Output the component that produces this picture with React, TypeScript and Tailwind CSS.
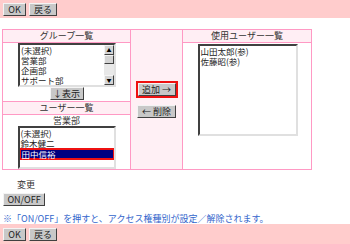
import React from "react"

const font = "font-['Noto_Sans_CJK_JP',sans-serif]"

function Btn({ children, className = "" }: { children: React.ReactNode; className?: string }) {
  return (
    <button
      className={`h-[13px] px-0 bg-[#c8c8c8] text-[9px] leading-none whitespace-nowrap text-[#222] border border-t-[#f4f4f4] border-l-[#f4f4f4] border-r-[#404040] border-b-[#404040] flex items-center justify-center shrink-0 ${className}`}
    >
      {children}
    </button>
  )
}

function ActionBar({ className = "" }: { className?: string }) {
  return (
    <div className={`bg-[#ffcccc] flex items-center gap-[3px] px-[3px] ${className}`}>
      <Btn className="w-[23px]">OK</Btn>
      <Btn className="w-[28px]">戻る</Btn>
    </div>
  )
}

const raised = "bg-[#d4d4d4] border border-t-[#f4f4f4] border-l-[#f4f4f4] border-r-[#404040] border-b-[#404040]"

function ListBox({ items, selected, scroll, className = "" }: { items: string[]; selected?: number; scroll?: boolean; className?: string }) {
  return (
    <div
      className={`flex overflow-hidden bg-white border-2 border-t-[#404040] border-l-[#404040] border-r-[#e0e0e0] border-b-[#e0e0e0] ${className}`}
    >
      <div className="flex-1 flex flex-col text-[8.5px] leading-[10px] text-[#222] whitespace-nowrap">
        {items.map((it, i) =>
          i === selected ? (
            <div key={it} className="bg-[#000080] text-white border-2 border-[#ee1111] -mx-[1px] h-[12px] leading-[8px] pl-[1px]">
              {it}
            </div>
          ) : (
            <div key={it} className="pl-[1px] h-[10px]">
              {it}
            </div>
          )
        )}
      </div>
      {scroll && (
        <div className="w-[10px] bg-[#e8e8e8] flex flex-col">
          <div className={`h-[10px] ${raised} text-[5px] leading-[8px] text-center`}>▲</div>
          <div className={`h-[9px] ${raised}`} />
          <div className="flex-1" />
          <div className={`h-[10px] ${raised} text-[5px] leading-[8px] text-center`}>▼</div>
        </div>
      )}
    </div>
  )
}

function Header({ children }: { children: React.ReactNode }) {
  return (
    <div className="h-[13px] bg-[#ffeef4] border-b border-[#ff99c4] text-center text-[9px] leading-[12px] text-[#333]">
      {children}
    </div>
  )
}

export default function App() {
  return (
    <div className={`w-[350px] h-[244px] bg-white ${font} flex flex-col`}>
      <ActionBar className="h-[19px]" />

      {/* メインテーブル */}
      <div className="mt-[11px] ml-[2px] w-[310px] h-[144px] flex border border-[#ff99c4]">
        {/* 左カラム */}
        <div className="w-[127px] flex flex-col">
          <Header>グループ一覧</Header>
          <div className="flex flex-col items-center pb-[1px]">
            <ListBox
              items={["(未選択)", "営業部", "企画部", "サポート部"]}
              scroll
              className="w-[98px] h-[44px] ml-[1px]"
            />
            <Btn className="w-[34px]">↓表示</Btn>
          </div>
          <div className="border-t border-[#ff99c4]" />
          <Header>ユーザー一覧</Header>
          <div className="flex flex-col items-center">
            <div className="text-[9px] leading-[11px] text-[#333]">営業部</div>
            <ListBox
              items={["(未選択)", "鈴木健二", "田中信裕"]}
              selected={2}
              className="w-[98px] h-[43px]"
            />
          </div>
        </div>

        {/* 中央カラム */}
        <div className="w-[53px] bg-[#fff0f5] border-l border-r border-[#ff99c4] flex flex-col items-center pt-[51px] gap-[7px]">
          <div className="border-2 border-[#ee1111]">
            <Btn className="w-[38px]">追加 →</Btn>
          </div>
          <Btn className="w-[39px]">← 削除</Btn>
        </div>

        {/* 右カラム */}
        <div className="flex-1 flex flex-col">
          <Header>使用ユーザー一覧</Header>
          <div className="flex justify-center pt-[1px]">
            <ListBox items={["山田太郎(参)", "佐藤昭(参)"]} className="w-[100px] h-[92px] ml-[1px]" />
          </div>
        </div>
      </div>

      <div className="mt-[9px] ml-[17px] text-[9px] leading-[12px] text-[#333]">変更</div>
      <div className="mt-[2px] ml-[3px]">
        <Btn className="w-[42px] h-[12px]">ON/OFF</Btn>
      </div>
      <div className="mt-[7px] ml-[3px] text-[9px] leading-[11px] text-[#3366cc] whitespace-nowrap">
        ※「ON/OFF」を押すと、アクセス権種別が設定／解除されます。
      </div>
      <div className="mt-auto">
        <ActionBar className="h-[20px]" />
      </div>
    </div>
  )
}
